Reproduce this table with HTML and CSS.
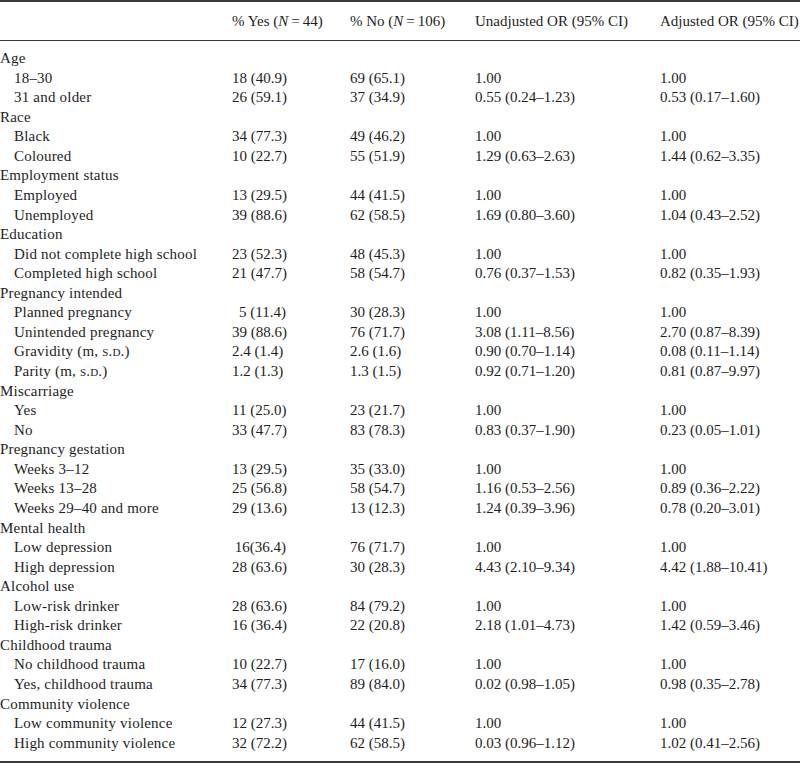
FILE: index.html
```html
<!DOCTYPE html>
<html>
<head>
<meta charset="utf-8">
<link rel="stylesheet" href="styles.css">
</head>
<body>
<table class="tbl">
  <colgroup>
    <col class="c-label">
    <col class="c-yes">
    <col class="c-no">
    <col class="c-un">
    <col class="c-adj">
  </colgroup>
  <thead>
    <tr>
      <th></th>
      <th>% Yes (<i>N</i>&#8201;=&#8201;44)</th>
      <th>% No (<i>N</i>&#8201;=&#8201;106)</th>
      <th>Unadjusted OR (95% CI)</th>
      <th>Adjusted OR (95% CI)</th>
    </tr>
  </thead>
  <tbody>
    <tr class="grp first"><td class="lbl">Age</td><td></td><td></td><td></td><td></td></tr>
    <tr><td class="lbl sub">18–30</td><td><span class="n">18 (40.9)</span></td><td>69 (65.1)</td><td>1.00</td><td>1.00</td></tr>
    <tr><td class="lbl sub">31 and older</td><td><span class="n">26 (59.1)</span></td><td>37 (34.9)</td><td>0.55 (0.24–1.23)</td><td>0.53 (0.17–1.60)</td></tr>
    <tr class="grp"><td class="lbl">Race</td><td></td><td></td><td></td><td></td></tr>
    <tr><td class="lbl sub">Black</td><td><span class="n">34 (77.3)</span></td><td>49 (46.2)</td><td>1.00</td><td>1.00</td></tr>
    <tr><td class="lbl sub">Coloured</td><td><span class="n">10 (22.7)</span></td><td>55 (51.9)</td><td>1.29 (0.63–2.63)</td><td>1.44 (0.62–3.35)</td></tr>
    <tr class="grp"><td class="lbl">Employment status</td><td></td><td></td><td></td><td></td></tr>
    <tr><td class="lbl sub">Employed</td><td><span class="n">13 (29.5)</span></td><td>44 (41.5)</td><td>1.00</td><td>1.00</td></tr>
    <tr><td class="lbl sub">Unemployed</td><td><span class="n">39 (88.6)</span></td><td>62 (58.5)</td><td>1.69 (0.80–3.60)</td><td>1.04 (0.43–2.52)</td></tr>
    <tr class="grp"><td class="lbl">Education</td><td></td><td></td><td></td><td></td></tr>
    <tr><td class="lbl sub">Did not complete high school</td><td><span class="n">23 (52.3)</span></td><td>48 (45.3)</td><td>1.00</td><td>1.00</td></tr>
    <tr><td class="lbl sub">Completed high school</td><td><span class="n">21 (47.7)</span></td><td>58 (54.7)</td><td>0.76 (0.37–1.53)</td><td>0.82 (0.35–1.93)</td></tr>
    <tr class="grp"><td class="lbl">Pregnancy intended</td><td></td><td></td><td></td><td></td></tr>
    <tr><td class="lbl sub">Planned pregnancy</td><td><span class="n">5 (11.4)</span></td><td>30 (28.3)</td><td>1.00</td><td>1.00</td></tr>
    <tr><td class="lbl sub">Unintended pregnancy</td><td><span class="n">39 (88.6)</span></td><td>76 (71.7)</td><td>3.08 (1.11–8.56)</td><td>2.70 (0.87–8.39)</td></tr>
    <tr><td class="lbl sub">Gravidity (m, <span class="sc">s.d.</span>)</td><td>2.4 (1.4)</td><td>2.6 (1.6)</td><td>0.90 (0.70–1.14)</td><td>0.08 (0.11–1.14)</td></tr>
    <tr><td class="lbl sub">Parity (m, <span class="sc">s.d.</span>)</td><td>1.2 (1.3)</td><td>1.3 (1.5)</td><td>0.92 (0.71–1.20)</td><td>0.81 (0.87–9.97)</td></tr>
    <tr class="grp"><td class="lbl">Miscarriage</td><td></td><td></td><td></td><td></td></tr>
    <tr><td class="lbl sub">Yes</td><td><span class="n">11 (25.0)</span></td><td>23 (21.7)</td><td>1.00</td><td>1.00</td></tr>
    <tr><td class="lbl sub">No</td><td><span class="n">33 (47.7)</span></td><td>83 (78.3)</td><td>0.83 (0.37–1.90)</td><td>0.23 (0.05–1.01)</td></tr>
    <tr class="grp"><td class="lbl">Pregnancy gestation</td><td></td><td></td><td></td><td></td></tr>
    <tr><td class="lbl sub">Weeks 3–12</td><td><span class="n">13 (29.5)</span></td><td>35 (33.0)</td><td>1.00</td><td>1.00</td></tr>
    <tr><td class="lbl sub">Weeks 13–28</td><td><span class="n">25 (56.8)</span></td><td>58 (54.7)</td><td>1.16 (0.53–2.56)</td><td>0.89 (0.36–2.22)</td></tr>
    <tr><td class="lbl sub">Weeks 29–40 and more</td><td><span class="n">29 (13.6)</span></td><td>13 (12.3)</td><td>1.24 (0.39–3.96)</td><td>0.78 (0.20–3.01)</td></tr>
    <tr class="grp"><td class="lbl">Mental health</td><td></td><td></td><td></td><td></td></tr>
    <tr><td class="lbl sub">Low depression</td><td><span class="n">16(36.4)</span></td><td>76 (71.7)</td><td>1.00</td><td>1.00</td></tr>
    <tr><td class="lbl sub">High depression</td><td><span class="n">28 (63.6)</span></td><td>30 (28.3)</td><td>4.43 (2.10–9.34)</td><td>4.42 (1.88–10.41)</td></tr>
    <tr class="grp"><td class="lbl">Alcohol use</td><td></td><td></td><td></td><td></td></tr>
    <tr><td class="lbl sub">Low-risk drinker</td><td><span class="n">28 (63.6)</span></td><td>84 (79.2)</td><td>1.00</td><td>1.00</td></tr>
    <tr><td class="lbl sub">High-risk drinker</td><td><span class="n">16 (36.4)</span></td><td>22 (20.8)</td><td>2.18 (1.01–4.73)</td><td>1.42 (0.59–3.46)</td></tr>
    <tr class="grp"><td class="lbl">Childhood trauma</td><td></td><td></td><td></td><td></td></tr>
    <tr><td class="lbl sub">No childhood trauma</td><td><span class="n">10 (22.7)</span></td><td>17 (16.0)</td><td>1.00</td><td>1.00</td></tr>
    <tr><td class="lbl sub">Yes, childhood trauma</td><td><span class="n">34 (77.3)</span></td><td>89 (84.0)</td><td>0.02 (0.98–1.05)</td><td>0.98 (0.35–2.78)</td></tr>
    <tr class="grp"><td class="lbl">Community violence</td><td></td><td></td><td></td><td></td></tr>
    <tr><td class="lbl sub">Low community violence</td><td><span class="n">12 (27.3)</span></td><td>44 (41.5)</td><td>1.00</td><td>1.00</td></tr>
    <tr class="last"><td class="lbl sub">High community violence</td><td><span class="n">32 (72.2)</span></td><td>62 (58.5)</td><td>0.03 (0.96–1.12)</td><td>1.02 (0.41–2.56)</td></tr>
  </tbody>
</table>
</body>
</html>
```

FILE: styles.css
```css
html, body {
  margin: 0;
  padding: 0;
  background: #ffffff;
}
body {
  font-family: "Liberation Serif", "DejaVu Serif", serif;
  font-size: 15px;
  color: #1e1e1e;
}
.tbl {
  width: 800px;
  border-collapse: collapse;
  table-layout: fixed;
  border-top: 2px solid #3a3a3a;
  border-bottom: 2px solid #3a3a3a;
}
.c-label { width: 232px; }
.c-yes { width: 118px; }
.c-no { width: 125px; }
.c-un { width: 185px; }
.c-adj { width: 140px; }
th {
  font-weight: normal;
  text-align: left;
  white-space: nowrap;
  height: 38px;
  padding: 0;
  vertical-align: middle;
  border-bottom: 1px solid #3a3a3a;
}
td {
  padding: 0;
  height: 19.57px;
  line-height: 19.57px;
  white-space: nowrap;
  vertical-align: middle;
}
.lbl { letter-spacing: 0.2px; }
.first td { padding-top: 8px; }
.last td { padding-bottom: 8px; }
.sub { padding-left: 14px; }
.n {
  display: inline-block;
  width: 54px;
  text-align: right;
}
.sc {
  font-variant: small-caps;
}
```
